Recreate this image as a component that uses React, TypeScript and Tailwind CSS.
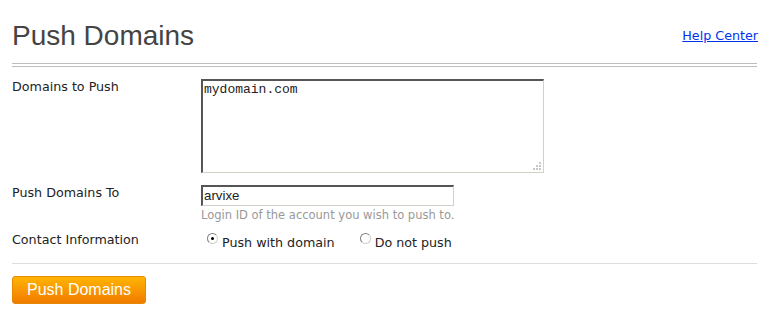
import React from "react";

function Radio({ checked }: { checked: boolean }) {
  return (
    <span className="relative inline-block w-[11px] h-[11px] rounded-full border border-t-[#808080] border-l-[#808080] border-b-[#d4d0c8] border-r-[#d4d0c8] bg-white mr-[4px] top-[-5px]">
      {checked && <span className="absolute left-[3px] top-[3px] w-[3px] h-[3px] rounded-full bg-black" />}
    </span>
  );
}

export default function App() {
  return (
    <div className="w-[769px] h-[317px] bg-white px-[12px] text-[#222] [font-family:'DejaVu_Sans',Verdana,sans-serif] text-[12.7px]">
      <div className="flex items-end justify-between h-[56px] pb-[4px]">
        <h1 className="[font-family:'Liberation_Sans',Arial,sans-serif] text-[28px] leading-[32px] text-[#444]">Push Domains</h1>
        <a href="#" className="text-[12.7px] text-[#0033ee] underline mb-[7px] mr-[-1px]">Help Center</a>
      </div>
      <div className="border-t border-b border-[#bdbdbd] h-[4px] mt-[7px]" />
      <div className="flex mt-[12px]">
        <div className="w-[189px] mt-[-2px]">Domains to Push</div>
        <div className="w-[343px] h-[94px] border-t-2 border-l-2 border-b border-r border-t-[#555] border-l-[#555] border-b-[#d4d0c8] border-r-[#d4d0c8] [font-family:'Liberation_Mono','Courier_New',monospace] text-[13px] leading-[15px] pl-[1px] pt-[1px] relative">
          mydomain.com
          <svg className="absolute right-[1px] bottom-[1px]" width="10" height="10" viewBox="0 0 10 10">
            <rect x="7" y="1" width="2" height="2" fill="#c8c8c8" />
            <rect x="4" y="4" width="2" height="2" fill="#c8c8c8" />
            <rect x="7" y="4" width="2" height="2" fill="#c8c8c8" />
            <rect x="1" y="7" width="2" height="2" fill="#c8c8c8" />
            <rect x="4" y="7" width="2" height="2" fill="#c8c8c8" />
            <rect x="7" y="7" width="2" height="2" fill="#c8c8c8" />
          </svg>
        </div>
      </div>
      <div className="flex mt-[12px]">
        <div className="w-[189px] mt-[-2px]">Push Domains To</div>
        <div>
          <div className="w-[253px] h-[21px] border-t-2 border-l-2 border-b border-r border-t-[#555] border-l-[#555] border-b-[#d4d0c8] border-r-[#d4d0c8] [font-family:'Liberation_Sans',Arial,sans-serif] text-[13.3px] leading-[17px] pl-[1px]">arvixe</div>
          <div className="text-[11.5px] text-[#999] mt-[3px] leading-[13px]">Login ID of the account you wish to push to.</div>
        </div>
      </div>
      <div className="flex mt-[9px] h-[22px]">
        <div className="w-[195px] mt-[-1px]">Contact Information</div>
        <div className="flex items-center h-[22px] mt-[1px]">
          <Radio checked />
          <span>Push with domain</span>
          <span className="inline-block w-[25px]" />
          <Radio checked={false} />
          <span>Do not push</span>
        </div>
      </div>
      <div className="border-t border-[#dddddd] mt-[10px]" />
      <button className="mt-[12px] w-[134px] h-[28px] rounded-[3px] border border-[#e58a00] bg-gradient-to-b from-[#ffb400] to-[#f07a00] text-white text-[16px] [font-family:'Liberation_Sans',Arial,sans-serif] leading-[26px]">Push Domains</button>
    </div>
  );
}
